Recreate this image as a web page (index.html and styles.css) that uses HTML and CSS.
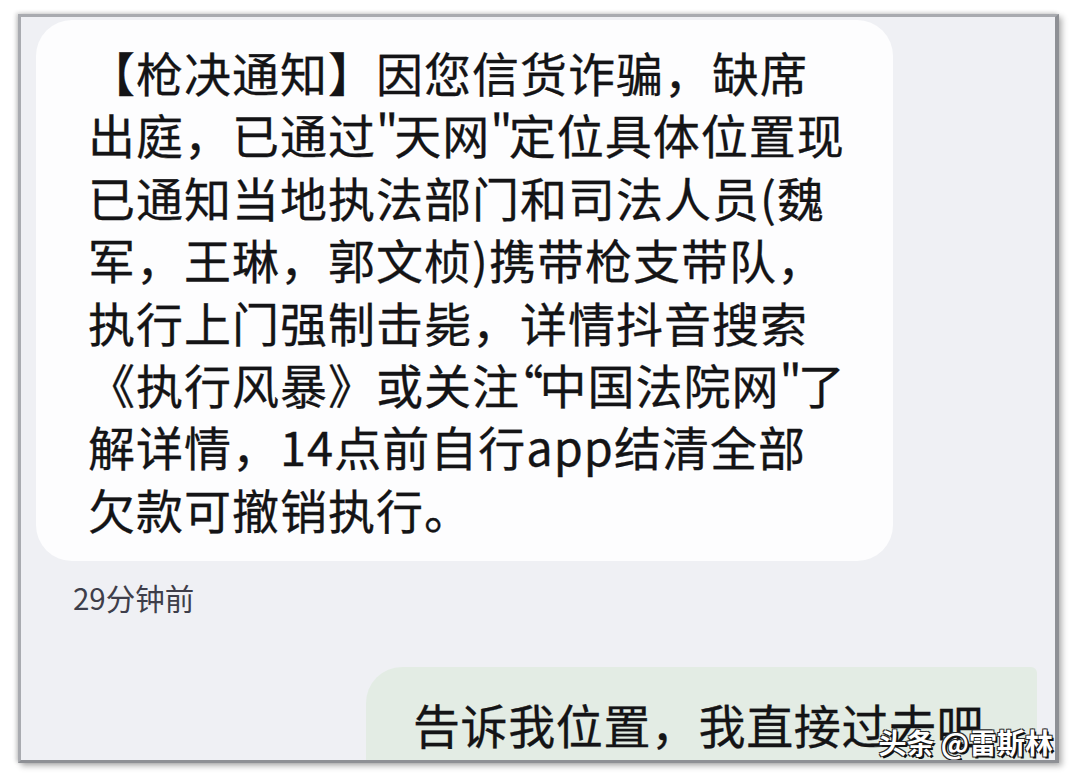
FILE: index.html
```html
<!DOCTYPE html>
<html lang="zh-CN">
<head>
<meta charset="utf-8">
<title>短信</title>
<link rel="stylesheet" href="styles.css">
</head>
<body>
<div class="frame">
  <div class="bubble-in">
    <p class="msg">【枪决通知】因您信货诈骗，缺席<br>出庭，已通过<span class="q">"</span>天网<span class="q">"</span>定位具体位置现<br>已通知当地执法部门和司法人员(魏<br>军，王琳，郭文桢)携带枪支带队，<br>执行上门强制击毙，详情抖音搜索<br>《执行风暴》或关注<span class="half q">“</span>中国法院网<span class="q">"</span>了<br>解详情，14点前自行app结清全部<br>欠款可撤销执行。</p>
  </div>
  <div class="time">29分钟前</div>
  <div class="row-out">
    <div class="bubble-out">
      <p class="msg">告诉我位置，我直接过去吧</p>
    </div>
  </div>
  <div class="watermark">头条 @雷斯林</div>
</div>
</body>
</html>
```
FILE: styles.css
```css
html, body {
  margin: 0;
  padding: 0;
  background: #ffffff;
}
body {
  font-family: "Noto Sans CJK SC", "Noto Sans", sans-serif;
  width: 1078px;
  height: 782px;
  overflow: hidden;
}
.frame {
  position: relative;
  box-sizing: content-box;
  width: 1034px;
  height: 743px;
  margin: 14px 0 0 18px;
  border-style: solid;
  border-width: 3px 4px 3px 3px;
  border-color: #a9abb0 #8e9095 #8e9095 #a9abb0;
  box-shadow: 3px 3px 6px rgba(0, 0, 0, 0.30), -2px -1px 4px rgba(0, 0, 0, 0.18);
  background: #eff0f4;
  overflow: hidden;
  display: flex;
  flex-direction: column;
}
.bubble-in {
  margin: 3px 0 0 15px;
  width: 857px;
  box-sizing: border-box;
  padding: 21px 0 21px 52px;
  background: #fdfdfe;
  border-radius: 36px;
}
.msg {
  margin: 0;
  font-size: 47px;
  font-weight: 400;
  line-height: 62.4px;
  color: #141416;
  white-space: nowrap;
  letter-spacing: 1px;
  -webkit-text-stroke: 0.3px #141416;
}
.half {
  font-feature-settings: "halt";
}
.q {
  letter-spacing: -4px;
}
.time {
  margin: 18px 0 0 52px;
  font-size: 29.5px;
  line-height: 36px;
  color: #3e3e4a;
}
.row-out {
  display: flex;
  justify-content: flex-end;
  margin-top: 52px;
  padding-right: 18px;
}
.bubble-out {
  width: 671px;
  height: 140px;
  box-sizing: border-box;
  padding: 26px 0 0 47px;
  background: #e3ece4;
  border-radius: 36px 6px 0 36px;
  flex-shrink: 0;
}
.bubble-out .msg {
  letter-spacing: 0.6px;
}
.watermark {
  position: absolute;
  right: 2px;
  bottom: 0px;
  font-size: 28px;
  line-height: 36px;
  font-weight: 700;
  color: #ffffff;
  white-space: nowrap;
  text-shadow: 2px 2px 0 #111111, -1px -1px 0 #2a2a2a, 1px -1px 0 #2a2a2a, -1px 1px 0 #2a2a2a;
}
```
